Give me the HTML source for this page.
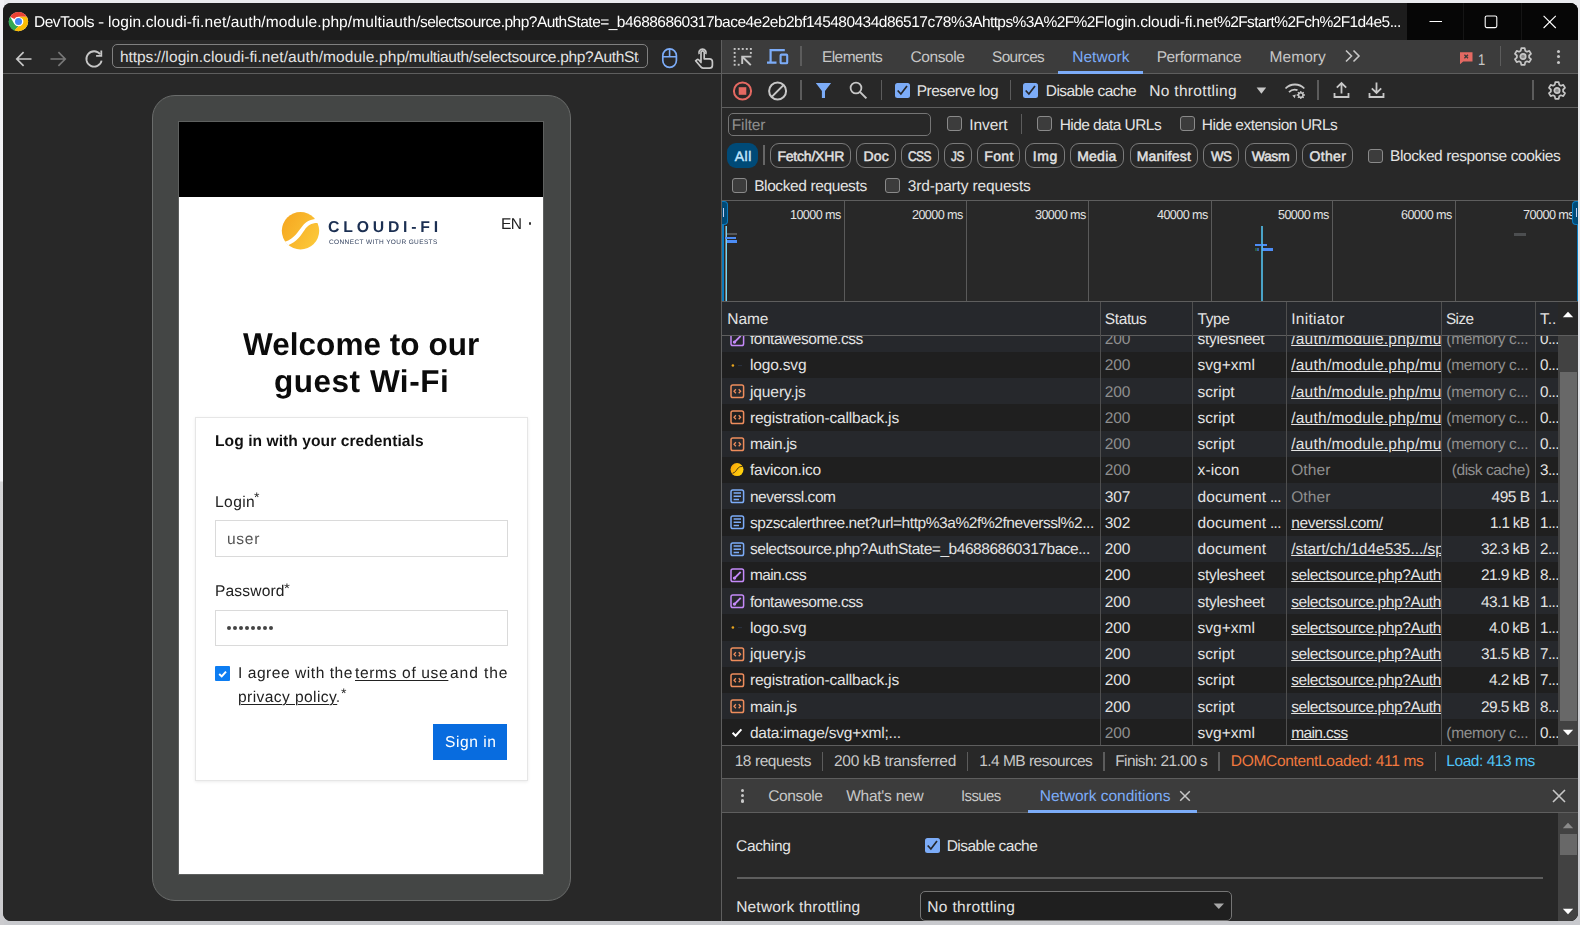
<!DOCTYPE html>
<html lang="en"><head><meta charset="utf-8"><title>DevTools</title>
<style>
html,body{margin:0;padding:0;}
body{width:1580px;height:925px;overflow:hidden;position:relative;background:#d6d6d6;font-family:"Liberation Sans",sans-serif;}
.b{position:absolute;box-sizing:border-box;display:block;}
.t{position:absolute;white-space:pre;font-family:"Liberation Sans",sans-serif;text-rendering:geometricPrecision;}
#win{position:absolute;left:3px;top:3px;width:1575px;height:918.4px;border-radius:8px;overflow:hidden;background:#282828;}

</style></head>
<body>
<div class="b" style="left:0;top:0;width:1580px;height:925px;background:linear-gradient(#e9eaed 0,#e4e5e9 40%,#cfd0d4 75%,#c8c9cd 100%)"></div>
<div class="b" style="left:0;top:0;width:4px;height:925px;background:linear-gradient(#f1f1f4 0,#f3f3f6 481px,#d4d4d6 482px,#cbcbce 100%)"></div>
<div id="win"><div id="in" class="b" style="left:-3px;top:-3px;width:1580px;height:925px">
<div class="b" style="left:3px;top:3px;width:1576px;height:37px;background:#1d1d1d;"></div>
<div class="b" style="left:1407px;top:3px;width:172px;height:37px;background:#060606;"></div>
<div class="b" style="left:1463px;top:3px;width:1px;height:37px;background:#151515;"></div>
<div class="b" style="left:1521px;top:3px;width:1px;height:37px;background:#151515;"></div>
<svg class="b" style="left:7.6px;top:11px;" width="21" height="21" viewBox="0 0 48 48"><circle cx="24" cy="24" r="22" fill="#fff"/>
<path d="M24 2a22 22 0 0 1 19.05 11H24a11 11 0 0 0-9.53 5.5L4.95 13A22 22 0 0 1 24 2z" fill="#ea4335"/>
<path d="M4.95 13l9.52 16.5A11 11 0 0 0 24 35l-9.52 9.9A22 22 0 0 1 4.95 13z" fill="#34a853"/>
<path d="M43.05 13A22 22 0 0 1 24 46c-3.3 0-6.5-.7-9.52-2.1L24 35a11 11 0 0 0 9.53-16.5L24 13z" fill="#fbbc04"/>
<circle cx="24" cy="24" r="10" fill="#fff"/><circle cx="24" cy="24" r="8" fill="#4285f4"/></svg>
<span class="t" id="t1" style="left:33.95px;top:12.82px;font-size:15.5px;line-height:20px;color:#ffffff;letter-spacing:-0.478px;will-change:transform;">DevTools</span>
<span class="t" id="t2" style="left:98.05px;top:12.82px;font-size:15.5px;line-height:20px;color:#ffffff;transform:scaleX(1.1998);transform-origin:0 0;will-change:transform;">-</span>
<span class="t" id="t3" style="left:107.85px;top:12.82px;font-size:15.5px;line-height:20px;color:#ffffff;letter-spacing:0.107px;will-change:transform;">login.cloudi-fi.net/auth/module.php/multiauth/</span>
<span class="t" id="t4" style="left:420.15px;top:12.82px;font-size:15.5px;line-height:20px;color:#ffffff;letter-spacing:-0.525px;will-change:transform;">selectsource.php?AuthState=_b46886860317bace4e2eb2bf145480434d86517c78</span>
<span class="t" id="t5" style="left:951.15px;top:12.82px;font-size:15.5px;line-height:20px;color:#ffffff;letter-spacing:-0.600px;transform:scaleX(0.9979);transform-origin:0 0;will-change:transform;">%3Ahttps%3A%2F%2F</span>
<span class="t" id="t6" style="left:1103.75px;top:12.82px;font-size:15.5px;line-height:20px;color:#ffffff;letter-spacing:-0.151px;will-change:transform;">login.cloudi-fi.net</span>
<span class="t" id="t7" style="left:1217.15px;top:12.82px;font-size:15.5px;line-height:20px;color:#ffffff;letter-spacing:-0.600px;transform:scaleX(0.9981);transform-origin:0 0;will-change:transform;">%2Fstart%2Fch%2F1d4e5...</span>
<svg class="b" style="left:1429px;top:15px;" width="14" height="14" viewBox="0 0 14 14"><path d="M0.5 6.5h12.5" stroke="#fff" stroke-width="1.1" fill="none"/></svg>
<svg class="b" style="left:1484px;top:15px;" width="14" height="14" viewBox="0 0 14 14"><rect x="1.2" y="1" width="11.6" height="11.6" rx="1.6" stroke="#fff" stroke-width="1.1" fill="none"/></svg>
<svg class="b" style="left:1543px;top:15px;" width="14" height="14" viewBox="0 0 14 14"><path d="M0.6 0.8L12.8 13M12.8 0.8L0.6 13" stroke="#fff" stroke-width="1.1" fill="none"/></svg>
<div class="b" style="left:3px;top:40px;width:718px;height:33px;background:#282828;"></div>
<div class="b" style="left:3px;top:73px;width:1576px;height:1px;background:#5e5e5e;"></div>
<svg class="b" style="left:14px;top:49px;" width="20" height="20" viewBox="0 0 20 20"><path d="M17.5 10H3.2M9.6 3.2L2.8 10l6.8 6.8" stroke="#c7c7c7" stroke-width="1.7" fill="none"/></svg>
<svg class="b" style="left:48px;top:49px;" width="20" height="20" viewBox="0 0 20 20"><path d="M2.5 10h14.3M10.4 3.2l6.8 6.800l-6.8 6.8" stroke="#777" stroke-width="1.7" fill="none"/></svg>
<svg class="b" style="left:83px;top:48px;" width="22" height="22" viewBox="0 0 22 22"><path d="M17.2 6.3A7.7 7.7 0 1 0 18.6 12.6" stroke="#c7c7c7" stroke-width="1.8" fill="none"/><path d="M18.3 2.6v5.2h-5.2" stroke="#c7c7c7" stroke-width="1.8" fill="none"/></svg>
<div class="b" style="left:112.2px;top:44.2px;width:536px;height:23.6px;background:#282828;border:1.2px solid #808080;border-radius:5px;"></div>
<span class="t" id="t8" style="left:120.05px;top:47.82px;font-size:15.5px;line-height:20px;color:#e3e3e3;letter-spacing:-0.103px;">https:</span>
<span class="t" id="t9" style="left:156.55px;top:47.82px;font-size:15.5px;line-height:20px;color:#e3e3e3;letter-spacing:0.105px;">//login.cloudi-fi.net/auth/module.php</span>
<span class="t" id="t10" style="left:404.75px;top:47.82px;font-size:15.5px;line-height:20px;color:#e3e3e3;letter-spacing:-0.310px;width:234.25px;overflow:hidden;">/multiauth/selectsource.php?AuthState</span>
<svg class="b" style="left:661px;top:47px;" width="18" height="22" viewBox="0 0 18 22"><rect x="1.800" y="1.800" width="13.600" height="18.600" rx="6.800" stroke="#7cacf8" stroke-width="1.700" fill="none"/><path d="M1.800 9.800h13.600M8.600 1.800v8" stroke="#7cacf8" stroke-width="1.600" fill="none"/></svg>
<svg class="b" style="left:694px;top:46px;" width="20" height="24" viewBox="0 0 20 24"><path d="M5.2 8.2a3.6 3.600 0 1 1 6.600 0" stroke="#c7c7c7" stroke-width="1.7" fill="none"/><path d="M7 16.500V6.4a1.60 1.600 0 0 1 3.2 0v6.4h5.200a3 3 0 0 1 3 3v3.400a3 3 0 0 1-3 3H9.400a3 3 0 0 1-2.300-1.100L1.600 14.800l1.200-1.000a1.500 1.500 0 0 1 1.900 0z" stroke="#c7c7c7" stroke-width="1.7" fill="none" stroke-linejoin="round"/></svg>
<div class="b" style="left:721px;top:40px;width:1.25px;height:881px;background:#5e5e5e;"></div>
<div class="b" style="left:3px;top:74px;width:718px;height:847px;background:#282828;"></div>
<div class="b" style="left:152px;top:95px;width:419px;height:805.6px;background:#444645;border:1px solid #6a6c6b;border-radius:23px;"></div>
<div class="b" style="left:178px;top:121px;width:366.3px;height:754.3px;background:#5e605f;"></div>
<div class="b" style="left:179px;top:122px;width:364.3px;height:75px;background:#000;"></div>
<div class="b" style="left:179px;top:197px;width:364.3px;height:677.3px;background:#fff;"></div>
<svg class="b" style="left:281px;top:212px" width="39" height="38" viewBox="0 0 39 38">
<defs><linearGradient id="lg" x1="0" y1="0.2" x2="1" y2="0.8"><stop offset="0" stop-color="#f6a821"/><stop offset="1" stop-color="#fcc93a"/></linearGradient></defs>
<circle cx="19.500" cy="18.800" r="18.700" fill="url(#lg)"/>
<path d="M38.500 7.200C31 6.600 25.500 9 21.300 14.200C17.200 19.300 13.500 26.500 4 29.800L7.200 33.200C15.500 30 19.800 23.500 23.600 18C27 13 31 10.600 38.500 11.200Z" fill="#fff"/>
</svg>
<span class="t" id="t11" style="left:327.63px;top:216.96px;font-size:15.8px;line-height:21px;color:#1b2f52;letter-spacing:3.785px;font-weight:700;will-change:transform;">CLOUDI-FI</span>
<span class="t" id="t12" style="left:328.74px;top:238.94px;font-size:6.5px;line-height:8px;color:#33425f;letter-spacing:0.386px;will-change:transform;">CONNECT WITH YOUR GUESTS</span>
<span class="t" id="t13" style="left:500.54px;top:214.84px;font-size:15.6px;line-height:20px;color:#222;letter-spacing:-0.600px;transform:scaleX(0.9879);transform-origin:0 0;will-change:transform;">EN</span>
<div class="b" style="left:528.5px;top:222.2px;width:2.4px;height:2.4px;background:#333;border-radius:1.2px;"></div>
<span class="t" id="t14" style="left:243.07px;top:324.02px;font-size:31.5px;line-height:41px;color:#0b0b0b;letter-spacing:0.043px;font-weight:700;will-change:transform;">Welcome to our</span>
<span class="t" id="t15" style="left:273.67px;top:361.02px;font-size:31.5px;line-height:41px;color:#0b0b0b;letter-spacing:0.521px;font-weight:700;will-change:transform;">guest Wi-Fi</span>
<div class="b" style="left:194.5px;top:416.5px;width:333.5px;height:364px;background:#fff;border:1px solid #e6e6e6;box-shadow:0 1px 3px rgba(0,0,0,.08);"></div>
<span class="t" id="t16" style="left:214.64px;top:431.84px;font-size:15.6px;line-height:20px;color:#111;letter-spacing:0.057px;font-weight:700;will-change:transform;">Log in with your credentials</span>
<span class="t" id="t17" style="left:214.64px;top:492.84px;font-size:15.6px;line-height:20px;color:#222;letter-spacing:0.390px;will-change:transform;">Login</span>
<span class="t" id="t18" style="left:254.33px;top:487.96px;font-size:14px;line-height:18px;color:#222;will-change:transform;">*</span>
<div class="b" style="left:214.6px;top:520.2px;width:293px;height:36.4px;background:#fff;border:1px solid #dadada;"></div>
<span class="t" id="t19" style="left:227.04px;top:529.84px;font-size:15.6px;line-height:20px;color:#555;letter-spacing:0.691px;will-change:transform;">user</span>
<span class="t" id="t20" style="left:214.74px;top:581.84px;font-size:15.6px;line-height:20px;color:#222;letter-spacing:0.150px;will-change:transform;">Password</span>
<span class="t" id="t21" style="left:283.63px;top:578.96px;font-size:14px;line-height:18px;color:#222;transform:scaleX(1.0709);transform-origin:0 0;will-change:transform;">*</span>
<div class="b" style="left:214.6px;top:609.6px;width:293px;height:36.2px;background:#fff;border:1px solid #dadada;"></div>
<div class="b" style="left:227.2px;top:626px;width:4.2px;height:4.2px;background:#444;border-radius:2.1px;"></div>
<div class="b" style="left:233.14999999999998px;top:626px;width:4.2px;height:4.2px;background:#444;border-radius:2.1px;"></div>
<div class="b" style="left:239.1px;top:626px;width:4.2px;height:4.2px;background:#444;border-radius:2.1px;"></div>
<div class="b" style="left:245.04999999999998px;top:626px;width:4.2px;height:4.2px;background:#444;border-radius:2.1px;"></div>
<div class="b" style="left:251.0px;top:626px;width:4.2px;height:4.2px;background:#444;border-radius:2.1px;"></div>
<div class="b" style="left:256.95px;top:626px;width:4.2px;height:4.2px;background:#444;border-radius:2.1px;"></div>
<div class="b" style="left:262.9px;top:626px;width:4.2px;height:4.2px;background:#444;border-radius:2.1px;"></div>
<div class="b" style="left:268.84999999999997px;top:626px;width:4.2px;height:4.2px;background:#444;border-radius:2.1px;"></div>
<div class="b" style="left:215px;top:665.5px;width:15.4px;height:15.4px;background:#0d7df2;border-radius:1px;"></div>
<svg class="b" style="left:215px;top:665.5px;" width="16" height="16" viewBox="0 0 16 16"><path d="M4.200 8.100l2.500 2.300l4.300-4.800" stroke="#fff" stroke-width="2" fill="none"/></svg>
<span class="t" id="t22" style="left:237.74px;top:663.84px;font-size:15.6px;line-height:20px;color:#222;letter-spacing:0.519px;will-change:transform;">I agree with the</span>
<span class="t" id="t23" style="left:354.94px;top:663.84px;font-size:15.6px;line-height:20px;color:#222;letter-spacing:0.629px;will-change:transform;text-decoration:underline;text-decoration-thickness:1.4px;text-underline-offset:2.2px;">terms of use</span>
<span class="t" id="t24" style="left:450.34px;top:663.84px;font-size:15.6px;line-height:20px;color:#222;letter-spacing:0.897px;will-change:transform;">and the</span>
<span class="t" id="t25" style="left:238.04px;top:687.84px;font-size:15.6px;line-height:20px;color:#222;letter-spacing:0.402px;will-change:transform;text-decoration:underline;text-decoration-thickness:1.4px;text-underline-offset:2.2px;">privacy policy</span>
<span class="t" id="t26" style="left:336.04px;top:687.84px;font-size:15.6px;line-height:20px;color:#222;transform:scaleX(0.8785);transform-origin:0 0;will-change:transform;">.</span>
<span class="t" id="t27" style="left:341.03px;top:683.96px;font-size:14px;line-height:18px;color:#222;will-change:transform;">*</span>
<div class="b" style="left:433.4px;top:724px;width:73.8px;height:36.2px;background:#086cdf;"></div>
<span class="t" id="t28" style="left:444.84px;top:732.84px;font-size:15.6px;line-height:20px;color:#fff;letter-spacing:0.555px;will-change:transform;">Sign in</span>
<div class="b" style="left:722.25px;top:40px;width:856px;height:33px;background:#3c3c3c;"></div>
<div class="b" style="left:722px;top:73px;width:857px;height:1px;background:#5e5e5e;"></div>
<svg class="b" style="left:733px;top:47px;" width="20" height="20" viewBox="0 0 20 20"><rect x="0.70" y="1.00" width="1.900" height="1.900" fill="#c7c7c7"/><rect x="4.75" y="1.00" width="1.900" height="1.900" fill="#c7c7c7"/><rect x="8.80" y="1.00" width="1.900" height="1.900" fill="#c7c7c7"/><rect x="12.85" y="1.00" width="1.900" height="1.900" fill="#c7c7c7"/><rect x="16.90" y="1.00" width="1.900" height="1.900" fill="#c7c7c7"/><rect x="0.70" y="4.95" width="1.900" height="1.900" fill="#c7c7c7"/><rect x="0.70" y="8.90" width="1.900" height="1.900" fill="#c7c7c7"/><rect x="0.70" y="12.85" width="1.900" height="1.900" fill="#c7c7c7"/><rect x="0.70" y="16.80" width="1.900" height="1.900" fill="#c7c7c7"/><rect x="16.90" y="4.95" width="1.900" height="1.900" fill="#c7c7c7"/><rect x="4.75" y="16.80" width="1.900" height="1.900" fill="#c7c7c7"/><path d="M18.400 9.600H9.200V17" stroke="#c7c7c7" stroke-width="1.900" fill="none"/><path d="M9.600 10l8.200 8.200" stroke="#c7c7c7" stroke-width="1.900" fill="none"/></svg>
<svg class="b" style="left:766px;top:48px;" width="24" height="18" viewBox="0 0 24 18"><path d="M4.600 14.500V2.200h14.200" stroke="#7cacf8" stroke-width="2.200" fill="none"/><path d="M1 14.600h9.500" stroke="#7cacf8" stroke-width="2.200" fill="none"/><rect x="14.600" y="6.600" width="6.600" height="8.600" rx="0.800" stroke="#7cacf8" stroke-width="2.100" fill="none"/></svg>
<div class="b" style="left:800.2px;top:46px;width:1.8px;height:20px;background:#5c5c5c;"></div>
<span class="t" id="t29" style="left:821.95px;top:47.82px;font-size:15.5px;line-height:20px;color:#c7c7c7;letter-spacing:-0.560px;">Elements</span>
<span class="t" id="t30" style="left:910.55px;top:47.82px;font-size:15.5px;line-height:20px;color:#c7c7c7;letter-spacing:-0.428px;">Console</span>
<span class="t" id="t31" style="left:991.55px;top:47.82px;font-size:15.5px;line-height:20px;color:#c7c7c7;letter-spacing:-0.600px;transform:scaleX(0.9912);transform-origin:0 0;">Sources</span>
<span class="t" id="t32" style="left:1072.15px;top:47.82px;font-size:15.5px;line-height:20px;color:#7cacf8;letter-spacing:0.074px;">Network</span>
<div class="b" style="left:1058px;top:71px;width:85px;height:2.7px;background:#7cacf8;"></div>
<span class="t" id="t33" style="left:1156.65px;top:47.82px;font-size:15.5px;line-height:20px;color:#c7c7c7;letter-spacing:-0.373px;">Performance</span>
<span class="t" id="t34" style="left:1269.55px;top:47.82px;font-size:15.5px;line-height:20px;color:#c7c7c7;letter-spacing:0.064px;">Memory</span>
<svg class="b" style="left:1344px;top:49px;" width="18" height="14" viewBox="0 0 18 14"><path d="M2 1.500l5.500 5.500l-5.500 5.500M9.500 1.500l5.500 5.500l-5.500 5.500" stroke="#c7c7c7" stroke-width="1.600" fill="none"/></svg>
<svg class="b" style="left:1459px;top:51px;" width="15" height="14" viewBox="0 0 15 14"><path d="M1 1.200h12.500v9.300H4.200L1 13.200z" fill="#e46962"/><path d="M5.400 3.700l3.600 3.600M9 3.700L5.400 7.300" stroke="#3c3c3c" stroke-width="1.300"/></svg>
<span class="t" id="t35" style="left:1478.15px;top:50.82px;font-size:15.5px;line-height:20px;color:#c7c7c7;transform:scaleX(0.8354);transform-origin:0 0;">1</span>
<div class="b" style="left:1499.7px;top:46px;width:1.8px;height:20px;background:#5c5c5c;"></div>
<svg class="b" style="left:1513.3px;top:46.7px;" width="20" height="19" viewBox="0 0 20 19"><path fill="none" stroke="#c7c7c7" stroke-width="1.700" stroke-linejoin="round" d="M8.300 1.200h3.400l.500 2.500 1.700 1 2.400-.800 1.700 2.900-1.900 1.700v2l1.900 1.700-1.700 2.900-2.400-.800-1.700 1-.500 2.500H8.300l-.500-2.500-1.700-1-2.400.800L2 12.200l1.900-1.700v-2L2 6.800l1.700-2.900 2.400.800 1.700-1z"/><circle cx="10" cy="9.500" r="2.700" fill="#8a8a8a" stroke="#c7c7c7" stroke-width="1.700"/></svg>
<div class="b" style="left:1556.9px;top:49.699999999999996px;width:3.3px;height:3.3px;background:#c7c7c7;border-radius:2px;"></div>
<div class="b" style="left:1556.9px;top:55.1px;width:3.3px;height:3.3px;background:#c7c7c7;border-radius:2px;"></div>
<div class="b" style="left:1556.9px;top:60.5px;width:3.3px;height:3.3px;background:#c7c7c7;border-radius:2px;"></div>
<div class="b" style="left:722.25px;top:74px;width:856px;height:33px;background:#282828;"></div>
<div class="b" style="left:722px;top:107px;width:857px;height:1px;background:#5e5e5e;"></div>
<svg class="b" style="left:732px;top:80.5px;" width="21" height="21" viewBox="0 0 21 21"><circle cx="10.500" cy="10" r="8.600" stroke="#e46962" stroke-width="2" fill="none"/><rect x="6.700" y="6.200" width="7.600" height="7.600" fill="#e46962"/></svg>
<svg class="b" style="left:767px;top:80.5px;" width="21" height="21" viewBox="0 0 21 21"><circle cx="10.600" cy="10" r="8.500" stroke="#c7c7c7" stroke-width="2" fill="none"/><path d="M4.500 16.100L16.700 3.900" stroke="#c7c7c7" stroke-width="2"/></svg>
<div class="b" style="left:799.9px;top:80px;width:1.8px;height:20px;background:#5c5c5c;"></div>
<svg class="b" style="left:815px;top:82px;" width="18" height="17" viewBox="0 0 18 17"><path d="M0.800 1h15.300l-6.100 8v7.100H6.900V9z" fill="#7cacf8"/></svg>
<svg class="b" style="left:849px;top:81px;" width="19" height="19" viewBox="0 0 19 19"><circle cx="7" cy="7" r="5.400" stroke="#c7c7c7" stroke-width="1.800" fill="none"/><path d="M10.900 10.900l6.500 6.500" stroke="#c7c7c7" stroke-width="2"/></svg>
<div class="b" style="left:880.7px;top:80px;width:1.8px;height:20px;background:#5c5c5c;"></div>
<div class="b" style="left:895.2px;top:83.1px;width:14.8px;height:14.8px;background:#7cacf8;border-radius:2.500px;"></div>
<svg class="b" style="left:895.2px;top:83.1px;" width="15" height="15" viewBox="0 0 15 15"><path d="M2.700 7.500l3.200 3.500l6.100-8" stroke="#26282c" stroke-width="1.700" fill="none"/></svg>
<span class="t" id="t36" style="left:916.65px;top:81.82px;font-size:15.5px;line-height:20px;color:#e3e3e3;letter-spacing:-0.465px;">Preserve log</span>
<div class="b" style="left:1009.7px;top:80px;width:1.8px;height:20px;background:#5c5c5c;"></div>
<div class="b" style="left:1023.3px;top:83.1px;width:14.8px;height:14.8px;background:#7cacf8;border-radius:2.500px;"></div>
<svg class="b" style="left:1023.3px;top:83.1px;" width="15" height="15" viewBox="0 0 15 15"><path d="M2.700 7.500l3.200 3.500l6.100-8" stroke="#26282c" stroke-width="1.700" fill="none"/></svg>
<span class="t" id="t37" style="left:1045.75px;top:81.82px;font-size:15.5px;line-height:20px;color:#e3e3e3;letter-spacing:-0.538px;">Disable cache</span>
<span class="t" id="t38" style="left:1149.15px;top:81.82px;font-size:15.5px;line-height:20px;color:#e3e3e3;letter-spacing:0.327px;">No throttling</span>
<svg class="b" style="left:1255.7px;top:87px;" width="11" height="8" viewBox="0 0 11 8"><path d="M0.600 0.400h9.600l-4.800 6.400z" fill="#c7c7c7"/></svg>
<svg class="b" style="left:1284px;top:81px;" width="23" height="19" viewBox="0 0 23 19"><path d="M1.500 7.500a13 13 0 0 1 18.800 0" stroke="#c7c7c7" stroke-width="1.800" fill="none"/><path d="M5 11.200a8.200 8.200 0 0 1 8.500-2" stroke="#c7c7c7" stroke-width="1.800" fill="none"/><path d="M8.300 14.400l2.500 2.800l1-3.700z" fill="#c7c7c7"/><circle cx="16.800" cy="14" r="2.300" stroke="#c7c7c7" stroke-width="1.600" fill="none"/><path d="M16.800 9.900v1.500M16.800 16.600v1.500M12.700 14h1.500M19.400 14h1.500M13.900 11.100l1 1M18.700 15.900l1 1M13.900 16.900l1-1M18.700 12.100l1-1" stroke="#c7c7c7" stroke-width="1.300"/></svg>
<div class="b" style="left:1317.4px;top:80px;width:1.8px;height:20px;background:#5c5c5c;"></div>
<svg class="b" style="left:1333px;top:81px;" width="17" height="18" viewBox="0 0 17 18"><path d="M8.500 12.500V2.500M3.800 6.600l4.700-4.600l4.700 4.600" stroke="#c7c7c7" stroke-width="1.800" fill="none"/><path d="M1.500 12v4h14v-4" stroke="#c7c7c7" stroke-width="1.800" fill="none"/></svg>
<svg class="b" style="left:1368px;top:81px;" width="17" height="18" viewBox="0 0 17 18"><path d="M8.500 1.500v10M3.800 7.400l4.700 4.600l4.700-4.600" stroke="#c7c7c7" stroke-width="1.800" fill="none"/><path d="M1.500 12v4h14v-4" stroke="#c7c7c7" stroke-width="1.800" fill="none"/></svg>
<div class="b" style="left:1532.2px;top:80px;width:1.8px;height:20px;background:#5c5c5c;"></div>
<svg class="b" style="left:1546.5px;top:81.2px;" width="20" height="19" viewBox="0 0 20 19"><path fill="none" stroke="#c7c7c7" stroke-width="1.700" stroke-linejoin="round" d="M8.300 1.200h3.400l.500 2.500 1.700 1 2.400-.800 1.700 2.900-1.900 1.700v2l1.900 1.700-1.700 2.900-2.400-.800-1.700 1-.500 2.500H8.300l-.500-2.500-1.700-1-2.400.800L2 12.200l1.900-1.700v-2L2 6.800l1.700-2.900 2.400.800 1.700-1z"/><circle cx="10" cy="9.500" r="2.700" fill="#8a8a8a" stroke="#c7c7c7" stroke-width="1.700"/></svg>
<div class="b" style="left:722.25px;top:108px;width:856px;height:93px;background:#282828;"></div>
<div class="b" style="left:727.6px;top:112.5px;width:203px;height:23.4px;background:#282828;border:1.200px solid #757575;border-radius:5px;"></div>
<span class="t" id="t39" style="left:731.85px;top:115.82px;font-size:15.5px;line-height:20px;color:#8f8f8f;letter-spacing:-0.190px;">Filter</span>
<div class="b" style="left:947px;top:116.2px;width:14.8px;height:14.8px;background:#3c3c3c;border:1.400px solid #8a8a8a;border-radius:3px;"></div>
<span class="t" id="t40" style="left:969.15px;top:115.82px;font-size:15.5px;line-height:20px;color:#e3e3e3;letter-spacing:-0.052px;">Invert</span>
<div class="b" style="left:1020.5px;top:114px;width:1.8px;height:19.5px;background:#5c5c5c;"></div>
<div class="b" style="left:1037.2px;top:116.2px;width:14.8px;height:14.8px;background:#3c3c3c;border:1.400px solid #8a8a8a;border-radius:3px;"></div>
<span class="t" id="t41" style="left:1059.65px;top:115.82px;font-size:15.5px;line-height:20px;color:#e3e3e3;letter-spacing:-0.571px;">Hide data URLs</span>
<div class="b" style="left:1180.3px;top:116.2px;width:14.8px;height:14.8px;background:#3c3c3c;border:1.400px solid #8a8a8a;border-radius:3px;"></div>
<span class="t" id="t42" style="left:1201.85px;top:115.82px;font-size:15.5px;line-height:20px;color:#e3e3e3;letter-spacing:-0.534px;">Hide extension URLs</span>
<div class="b" style="left:727px;top:143px;width:31px;height:25px;background:#004a77;border-radius:9px;"></div>
<span class="t" id="t43" style="left:734.73px;top:146.96px;font-size:14px;line-height:18px;color:#c2e7ff;letter-spacing:0.489px;-webkit-text-stroke:0.45px #c2e7ff;">All</span>
<div class="b" style="left:763.1px;top:145px;width:1.8px;height:20px;background:#666;"></div>
<div class="b" style="left:770px;top:143px;width:81px;height:25px;border:1.250px solid #7a7a7a;border-radius:9px;"></div>
<span class="t" id="t44" style="left:777.43px;top:146.96px;font-size:14px;line-height:18px;color:#e3e3e3;letter-spacing:-0.204px;-webkit-text-stroke:0.45px #e3e3e3;">Fetch/XHR</span>
<div class="b" style="left:856.2px;top:143px;width:39.799999999999955px;height:25px;border:1.250px solid #7a7a7a;border-radius:9px;"></div>
<span class="t" id="t45" style="left:863.53px;top:146.96px;font-size:14px;line-height:18px;color:#e3e3e3;letter-spacing:0.117px;-webkit-text-stroke:0.45px #e3e3e3;">Doc</span>
<div class="b" style="left:901px;top:143px;width:38px;height:25px;border:1.250px solid #7a7a7a;border-radius:9px;"></div>
<span class="t" id="t46" style="left:908.33px;top:146.96px;font-size:14px;line-height:18px;color:#e3e3e3;letter-spacing:-0.600px;transform:scaleX(0.8530);transform-origin:0 0;-webkit-text-stroke:0.45px #e3e3e3;">CSS</span>
<div class="b" style="left:944px;top:143px;width:28px;height:25px;border:1.250px solid #7a7a7a;border-radius:9px;"></div>
<span class="t" id="t47" style="left:951.33px;top:146.96px;font-size:14px;line-height:18px;color:#e3e3e3;letter-spacing:-0.600px;transform:scaleX(0.8410);transform-origin:0 0;-webkit-text-stroke:0.45px #e3e3e3;">JS</span>
<div class="b" style="left:977px;top:143px;width:43px;height:25px;border:1.250px solid #7a7a7a;border-radius:9px;"></div>
<span class="t" id="t48" style="left:984.33px;top:146.96px;font-size:14px;line-height:18px;color:#e3e3e3;letter-spacing:0.308px;-webkit-text-stroke:0.45px #e3e3e3;">Font</span>
<div class="b" style="left:1025px;top:143px;width:39.799999999999955px;height:25px;border:1.250px solid #7a7a7a;border-radius:9px;"></div>
<span class="t" id="t49" style="left:1032.73px;top:146.96px;font-size:14px;line-height:18px;color:#e3e3e3;letter-spacing:0.598px;-webkit-text-stroke:0.45px #e3e3e3;">Img</span>
<div class="b" style="left:1070.3px;top:143px;width:53.299999999999955px;height:25px;border:1.250px solid #7a7a7a;border-radius:9px;"></div>
<span class="t" id="t50" style="left:1077.23px;top:146.96px;font-size:14px;line-height:18px;color:#e3e3e3;letter-spacing:0.225px;-webkit-text-stroke:0.45px #e3e3e3;">Media</span>
<div class="b" style="left:1129.5px;top:143px;width:68.40000000000009px;height:25px;border:1.250px solid #7a7a7a;border-radius:9px;"></div>
<span class="t" id="t51" style="left:1136.73px;top:146.96px;font-size:14px;line-height:18px;color:#e3e3e3;letter-spacing:0.174px;-webkit-text-stroke:0.45px #e3e3e3;">Manifest</span>
<div class="b" style="left:1203.3px;top:143px;width:35.600000000000136px;height:25px;border:1.250px solid #7a7a7a;border-radius:9px;"></div>
<span class="t" id="t52" style="left:1210.73px;top:146.96px;font-size:14px;line-height:18px;color:#e3e3e3;letter-spacing:-0.600px;transform:scaleX(0.9489);transform-origin:0 0;-webkit-text-stroke:0.45px #e3e3e3;">WS</span>
<div class="b" style="left:1244.7px;top:143px;width:52.299999999999955px;height:25px;border:1.250px solid #7a7a7a;border-radius:9px;"></div>
<span class="t" id="t53" style="left:1251.73px;top:146.96px;font-size:14px;line-height:18px;color:#e3e3e3;letter-spacing:-0.439px;-webkit-text-stroke:0.45px #e3e3e3;">Wasm</span>
<div class="b" style="left:1302.4px;top:143px;width:50.5px;height:25px;border:1.250px solid #7a7a7a;border-radius:9px;"></div>
<span class="t" id="t54" style="left:1309.43px;top:146.96px;font-size:14px;line-height:18px;color:#e3e3e3;letter-spacing:0.356px;-webkit-text-stroke:0.45px #e3e3e3;">Other</span>
<div class="b" style="left:1368.2px;top:148.5px;width:14.8px;height:14.8px;background:#3c3c3c;border:1.400px solid #8a8a8a;border-radius:3px;"></div>
<span class="t" id="t55" style="left:1390.05px;top:146.82px;font-size:15.5px;line-height:20px;color:#e3e3e3;letter-spacing:-0.408px;">Blocked response cookies</span>
<div class="b" style="left:732.3px;top:178.4px;width:14.8px;height:14.8px;background:#3c3c3c;border:1.400px solid #8a8a8a;border-radius:3px;"></div>
<span class="t" id="t56" style="left:754.15px;top:176.82px;font-size:15.5px;line-height:20px;color:#e3e3e3;letter-spacing:-0.393px;">Blocked requests</span>
<div class="b" style="left:885px;top:178.4px;width:14.8px;height:14.8px;background:#3c3c3c;border:1.400px solid #8a8a8a;border-radius:3px;"></div>
<span class="t" id="t57" style="left:907.75px;top:176.82px;font-size:15.5px;line-height:20px;color:#e3e3e3;letter-spacing:-0.157px;">3rd-party requests</span>
<div class="b" style="left:722.25px;top:200px;width:856px;height:1px;background:#5e5e5e;"></div>
<div class="b" style="left:722.25px;top:201px;width:856px;height:100px;background:#282828;"></div>
<div class="b" style="left:843.6999999999999px;top:201px;width:1.2px;height:100px;background:#5a5a5a;"></div>
<div class="b" style="left:966.0px;top:201px;width:1.2px;height:100px;background:#5a5a5a;"></div>
<div class="b" style="left:1088.3000000000002px;top:201px;width:1.2px;height:100px;background:#5a5a5a;"></div>
<div class="b" style="left:1210.8000000000002px;top:201px;width:1.2px;height:100px;background:#5a5a5a;"></div>
<div class="b" style="left:1332.0px;top:201px;width:1.2px;height:100px;background:#5a5a5a;"></div>
<div class="b" style="left:1454.7px;top:201px;width:1.2px;height:100px;background:#5a5a5a;"></div>
<span class="t" id="t58" style="left:789.98px;top:206.06px;font-size:13px;line-height:17px;color:#e3e3e3;letter-spacing:-0.600px;transform:scaleX(0.9685);transform-origin:0 0;">10000 ms</span>
<span class="t" id="t59" style="left:912.28px;top:206.06px;font-size:13px;line-height:17px;color:#e3e3e3;letter-spacing:-0.600px;transform:scaleX(0.9685);transform-origin:0 0;">20000 ms</span>
<span class="t" id="t60" style="left:1034.59px;top:206.06px;font-size:13px;line-height:17px;color:#e3e3e3;letter-spacing:-0.600px;transform:scaleX(0.9685);transform-origin:0 0;">30000 ms</span>
<span class="t" id="t61" style="left:1157.09px;top:206.06px;font-size:13px;line-height:17px;color:#e3e3e3;letter-spacing:-0.600px;transform:scaleX(0.9685);transform-origin:0 0;">40000 ms</span>
<span class="t" id="t62" style="left:1278.29px;top:206.06px;font-size:13px;line-height:17px;color:#e3e3e3;letter-spacing:-0.600px;transform:scaleX(0.9685);transform-origin:0 0;">50000 ms</span>
<span class="t" id="t63" style="left:1400.99px;top:206.06px;font-size:13px;line-height:17px;color:#e3e3e3;letter-spacing:-0.600px;transform:scaleX(0.9685);transform-origin:0 0;">60000 ms</span>
<span class="t" id="t64" style="left:1523.09px;top:206.06px;font-size:13px;line-height:17px;color:#e3e3e3;letter-spacing:-0.600px;transform:scaleX(0.9761);transform-origin:0 0;">70000 ms</span>
<div class="b" style="left:722.25px;top:201px;width:2px;height:100px;background:#0b7bbf;"></div>
<div class="b" style="left:722.25px;top:201px;width:5.8px;height:23.6px;background:#004a77;border:1.300px solid #0b7bbf;border-left:none;border-radius:0 4px 4px 0;"></div>
<div class="b" style="left:723px;top:208px;width:1.2px;height:9px;background:#b8cdf5;"></div>
<div class="b" style="left:724.8px;top:226px;width:0.9px;height:75px;background:#7a7a7a;"></div>
<div class="b" style="left:725.6px;top:226px;width:1.6px;height:75px;background:#6fd3f7;"></div>
<div class="b" style="left:727.4px;top:233px;width:10px;height:2px;background:#555759;"></div>
<div class="b" style="left:725px;top:236.6px;width:11.3px;height:2.6px;background:#4d8df6;"></div>
<div class="b" style="left:726.7px;top:240.2px;width:10.6px;height:2.8px;background:#4d8df6;"></div>
<div class="b" style="left:1260.8px;top:226px;width:2.3px;height:75px;background:#4aa3c8;"></div>
<div class="b" style="left:1254.6px;top:244px;width:12.2px;height:2.4px;background:#4d8df6;"></div>
<div class="b" style="left:1261.6px;top:247.8px;width:11.4px;height:3px;background:#4d8df6;"></div>
<div class="b" style="left:1254.8px;top:247.8px;width:2px;height:3px;background:#2c5f3e;"></div>
<div class="b" style="left:1256.8px;top:247.8px;width:2.4px;height:3px;background:#3a5fa8;"></div>
<div class="b" style="left:1262px;top:244px;width:1.3px;height:6.8px;background:#56b4f0;"></div>
<div class="b" style="left:1514px;top:233px;width:12px;height:2.5px;background:#4c4e50;"></div>
<div class="b" style="left:1572px;top:201px;width:6.5px;height:23.6px;background:#004a77;border:1.300px solid #0b7bbf;border-right:none;border-radius:4px 0 0 4px;"></div>
<div class="b" style="left:1575.8px;top:208px;width:1.2px;height:9px;background:#b8cdf5;"></div>
<div class="b" style="left:1576.8px;top:224px;width:1.3px;height:77px;background:#0b7bbf;"></div>
<div class="b" style="left:722.25px;top:301px;width:856px;height:1px;background:#5e5e5e;"></div>
<div class="b" style="left:722.25px;top:302px;width:836px;height:443px;background:#1f1f1f;"></div>
<div class="b" style="left:722.25px;top:325.5px;width:836px;height:26.25px;background:#26282c;"></div>
<svg class="b" style="left:730px;top:331.5px;" width="15" height="15" viewBox="0 0 15 15"><rect x="1" y="1" width="12.600" height="12.600" rx="1.800" stroke="#c58af9" stroke-width="1.500" fill="none"/><path d="M4.800 9.800L10.700 3.800" stroke="#c58af9" stroke-width="1.900"/><circle cx="4.500" cy="10.100" r="1.700" fill="#c58af9"/></svg>
<span class="t" id="t65" style="left:749.95px;top:329.82px;font-size:15.5px;line-height:20px;color:#e3e3e3;letter-spacing:-0.460px;">fontawesome.css</span>
<span class="t" id="t66" style="left:1104.85px;top:329.82px;font-size:15.5px;line-height:20px;color:#8f8f8f;letter-spacing:-0.135px;">200</span>
<span class="t" id="t67" style="left:1197.55px;top:329.82px;font-size:15.5px;line-height:20px;color:#e3e3e3;letter-spacing:-0.299px;">stylesheet</span>
<span class="t" id="t68" style="left:1291.15px;top:329.82px;font-size:15.5px;line-height:20px;color:#e3e3e3;letter-spacing:0.254px;text-decoration:underline;width:149.85px;overflow:hidden;">/auth/module.php/multiauth</span>
<span class="t" id="t69" style="left:1446.35px;top:329.82px;font-size:15.5px;line-height:20px;color:#8f8f8f;letter-spacing:-0.347px;">(memory c...</span>
<span class="t" id="t70" style="left:1540.05px;top:329.82px;font-size:15.5px;line-height:20px;color:#e3e3e3;letter-spacing:-0.600px;transform:scaleX(0.9827);transform-origin:0 0;">0...</span>
<div class="b" style="left:722.25px;top:351.75px;width:836px;height:26.25px;background:#1f1f1f;"></div>
<svg class="b" style="left:730px;top:357.75px;" width="15" height="15" viewBox="0 0 15 15"><circle cx="2.900" cy="7.500" r="1.300" fill="#e8a51e"/><path d="M8 7.600h4" stroke="#2a3240" stroke-width="1"/></svg>
<span class="t" id="t71" style="left:749.95px;top:355.82px;font-size:15.5px;line-height:20px;color:#e3e3e3;letter-spacing:-0.161px;">logo.svg</span>
<span class="t" id="t72" style="left:1104.85px;top:355.82px;font-size:15.5px;line-height:20px;color:#8f8f8f;letter-spacing:-0.135px;">200</span>
<span class="t" id="t73" style="left:1197.55px;top:355.82px;font-size:15.5px;line-height:20px;color:#e3e3e3;">svg+xml</span>
<span class="t" id="t74" style="left:1291.15px;top:355.82px;font-size:15.5px;line-height:20px;color:#e3e3e3;letter-spacing:0.254px;text-decoration:underline;width:149.85px;overflow:hidden;">/auth/module.php/multiauth</span>
<span class="t" id="t75" style="left:1446.35px;top:355.82px;font-size:15.5px;line-height:20px;color:#8f8f8f;letter-spacing:-0.347px;">(memory c...</span>
<span class="t" id="t76" style="left:1540.05px;top:355.82px;font-size:15.5px;line-height:20px;color:#e3e3e3;letter-spacing:-0.600px;transform:scaleX(0.9827);transform-origin:0 0;">0...</span>
<div class="b" style="left:722.25px;top:378.0px;width:836px;height:26.25px;background:#26282c;"></div>
<svg class="b" style="left:730px;top:384.0px;" width="15" height="15" viewBox="0 0 15 15"><rect x="1" y="1" width="12.600" height="12.600" rx="1.800" stroke="#ee8d5c" stroke-width="1.500" fill="none"/><path d="M5.900 5.200L4 7.200l1.900 2M8.700 5.200l1.900 2l-1.900 2" stroke="#ee8d5c" stroke-width="1.300" fill="none"/></svg>
<span class="t" id="t77" style="left:749.95px;top:382.82px;font-size:15.5px;line-height:20px;color:#e3e3e3;letter-spacing:-0.084px;">jquery.js</span>
<span class="t" id="t78" style="left:1104.85px;top:382.82px;font-size:15.5px;line-height:20px;color:#8f8f8f;letter-spacing:-0.135px;">200</span>
<span class="t" id="t79" style="left:1197.55px;top:382.82px;font-size:15.5px;line-height:20px;color:#e3e3e3;letter-spacing:0.012px;">script</span>
<span class="t" id="t80" style="left:1291.15px;top:382.82px;font-size:15.5px;line-height:20px;color:#e3e3e3;letter-spacing:0.254px;text-decoration:underline;width:149.85px;overflow:hidden;">/auth/module.php/multiauth</span>
<span class="t" id="t81" style="left:1446.35px;top:382.82px;font-size:15.5px;line-height:20px;color:#8f8f8f;letter-spacing:-0.347px;">(memory c...</span>
<span class="t" id="t82" style="left:1540.05px;top:382.82px;font-size:15.5px;line-height:20px;color:#e3e3e3;letter-spacing:-0.600px;transform:scaleX(0.9827);transform-origin:0 0;">0...</span>
<div class="b" style="left:722.25px;top:404.25px;width:836px;height:26.25px;background:#1f1f1f;"></div>
<svg class="b" style="left:730px;top:410.25px;" width="15" height="15" viewBox="0 0 15 15"><rect x="1" y="1" width="12.600" height="12.600" rx="1.800" stroke="#ee8d5c" stroke-width="1.500" fill="none"/><path d="M5.900 5.200L4 7.200l1.900 2M8.700 5.200l1.900 2l-1.900 2" stroke="#ee8d5c" stroke-width="1.300" fill="none"/></svg>
<span class="t" id="t83" style="left:749.95px;top:408.82px;font-size:15.5px;line-height:20px;color:#e3e3e3;letter-spacing:-0.180px;">registration-callback.js</span>
<span class="t" id="t84" style="left:1104.85px;top:408.82px;font-size:15.5px;line-height:20px;color:#8f8f8f;letter-spacing:-0.135px;">200</span>
<span class="t" id="t85" style="left:1197.55px;top:408.82px;font-size:15.5px;line-height:20px;color:#e3e3e3;letter-spacing:0.012px;">script</span>
<span class="t" id="t86" style="left:1291.15px;top:408.82px;font-size:15.5px;line-height:20px;color:#e3e3e3;letter-spacing:0.254px;text-decoration:underline;width:149.85px;overflow:hidden;">/auth/module.php/multiauth</span>
<span class="t" id="t87" style="left:1446.35px;top:408.82px;font-size:15.5px;line-height:20px;color:#8f8f8f;letter-spacing:-0.347px;">(memory c...</span>
<span class="t" id="t88" style="left:1540.05px;top:408.82px;font-size:15.5px;line-height:20px;color:#e3e3e3;letter-spacing:-0.600px;transform:scaleX(0.9827);transform-origin:0 0;">0...</span>
<div class="b" style="left:722.25px;top:430.5px;width:836px;height:26.25px;background:#26282c;"></div>
<svg class="b" style="left:730px;top:436.5px;" width="15" height="15" viewBox="0 0 15 15"><rect x="1" y="1" width="12.600" height="12.600" rx="1.800" stroke="#ee8d5c" stroke-width="1.500" fill="none"/><path d="M5.900 5.200L4 7.200l1.900 2M8.700 5.200l1.900 2l-1.900 2" stroke="#ee8d5c" stroke-width="1.300" fill="none"/></svg>
<span class="t" id="t89" style="left:749.95px;top:434.82px;font-size:15.5px;line-height:20px;color:#e3e3e3;letter-spacing:-0.334px;">main.js</span>
<span class="t" id="t90" style="left:1104.85px;top:434.82px;font-size:15.5px;line-height:20px;color:#8f8f8f;letter-spacing:-0.135px;">200</span>
<span class="t" id="t91" style="left:1197.55px;top:434.82px;font-size:15.5px;line-height:20px;color:#e3e3e3;letter-spacing:0.012px;">script</span>
<span class="t" id="t92" style="left:1291.15px;top:434.82px;font-size:15.5px;line-height:20px;color:#e3e3e3;letter-spacing:0.254px;text-decoration:underline;width:149.85px;overflow:hidden;">/auth/module.php/multiauth</span>
<span class="t" id="t93" style="left:1446.35px;top:434.82px;font-size:15.5px;line-height:20px;color:#8f8f8f;letter-spacing:-0.347px;">(memory c...</span>
<span class="t" id="t94" style="left:1540.05px;top:434.82px;font-size:15.5px;line-height:20px;color:#e3e3e3;letter-spacing:-0.600px;transform:scaleX(0.9827);transform-origin:0 0;">0...</span>
<div class="b" style="left:722.25px;top:456.75px;width:836px;height:26.25px;background:#1f1f1f;"></div>
<svg class="b" style="left:730px;top:462.75px;" width="15" height="15" viewBox="0 0 15 15"><defs><linearGradient id="fg" x1="0" y1="0.3" x2="1" y2="0.7"><stop offset="0" stop-color="#fba70a"/><stop offset="1" stop-color="#ffd60e"/></linearGradient></defs><circle cx="7" cy="6.600" r="6.500" fill="url(#fg)"/><path d="M2.600 10.300C5.500 9.300 6.200 7.600 7.300 6C8.600 4.200 10 3.300 12.600 3.500" stroke="#3b2a12" stroke-width="0.900" fill="none"/></svg>
<span class="t" id="t95" style="left:749.95px;top:460.82px;font-size:15.5px;line-height:20px;color:#e3e3e3;letter-spacing:-0.213px;">favicon.ico</span>
<span class="t" id="t96" style="left:1104.85px;top:460.82px;font-size:15.5px;line-height:20px;color:#8f8f8f;letter-spacing:-0.135px;">200</span>
<span class="t" id="t97" style="left:1197.55px;top:460.82px;font-size:15.5px;line-height:20px;color:#e3e3e3;letter-spacing:0.089px;">x-icon</span>
<span class="t" id="t98" style="left:1291.15px;top:460.82px;font-size:15.5px;line-height:20px;color:#8f8f8f;letter-spacing:0.135px;">Other</span>
<span class="t" id="t99" style="left:1451.85px;top:460.82px;font-size:15.5px;line-height:20px;color:#8f8f8f;letter-spacing:-0.487px;">(disk cache)</span>
<span class="t" id="t100" style="left:1540.05px;top:460.82px;font-size:15.5px;line-height:20px;color:#e3e3e3;letter-spacing:-0.600px;transform:scaleX(0.9827);transform-origin:0 0;">3...</span>
<div class="b" style="left:722.25px;top:483.0px;width:836px;height:26.25px;background:#26282c;"></div>
<svg class="b" style="left:730px;top:489.0px;" width="15" height="15" viewBox="0 0 15 15"><rect x="1" y="1" width="12.600" height="12.600" rx="1.800" stroke="#7cacf8" stroke-width="1.500" fill="none"/><path d="M3.600 4h7.400M3.600 7.200h7.400M3.600 10.500h5.400" stroke="#7cacf8" stroke-width="1.600"/></svg>
<span class="t" id="t101" style="left:749.95px;top:487.82px;font-size:15.5px;line-height:20px;color:#e3e3e3;letter-spacing:-0.482px;">neverssl.com</span>
<span class="t" id="t102" style="left:1104.85px;top:487.82px;font-size:15.5px;line-height:20px;color:#e3e3e3;letter-spacing:-0.135px;">307</span>
<span class="t" id="t103" style="left:1197.55px;top:487.82px;font-size:15.5px;line-height:20px;color:#e3e3e3;letter-spacing:0.047px;">document</span>
<span class="t" id="t104" style="left:1269.55px;top:487.82px;font-size:15.5px;line-height:20px;color:#e3e3e3;letter-spacing:-0.600px;transform:scaleX(0.9730);transform-origin:0 0;">...</span>
<span class="t" id="t105" style="left:1291.15px;top:487.82px;font-size:15.5px;line-height:20px;color:#8f8f8f;letter-spacing:0.135px;">Other</span>
<span class="t" id="t106" style="left:1491.55px;top:487.82px;font-size:15.5px;line-height:20px;color:#e3e3e3;letter-spacing:-0.503px;">495 B</span>
<span class="t" id="t107" style="left:1540.05px;top:487.82px;font-size:15.5px;line-height:20px;color:#e3e3e3;letter-spacing:-0.600px;transform:scaleX(0.9827);transform-origin:0 0;">1...</span>
<div class="b" style="left:722.25px;top:509.25px;width:836px;height:26.25px;background:#1f1f1f;"></div>
<svg class="b" style="left:730px;top:515.25px;" width="15" height="15" viewBox="0 0 15 15"><rect x="1" y="1" width="12.600" height="12.600" rx="1.800" stroke="#7cacf8" stroke-width="1.500" fill="none"/><path d="M3.600 4h7.400M3.600 7.200h7.400M3.600 10.500h5.400" stroke="#7cacf8" stroke-width="1.600"/></svg>
<span class="t" id="t108" style="left:749.95px;top:513.82px;font-size:15.5px;line-height:20px;color:#e3e3e3;letter-spacing:-0.429px;">spzscalerthree.net?url=http%3a%2f%2fneverssl%2...</span>
<span class="t" id="t109" style="left:1104.85px;top:513.82px;font-size:15.5px;line-height:20px;color:#e3e3e3;letter-spacing:-0.135px;">302</span>
<span class="t" id="t110" style="left:1197.55px;top:513.82px;font-size:15.5px;line-height:20px;color:#e3e3e3;letter-spacing:0.047px;">document</span>
<span class="t" id="t111" style="left:1269.55px;top:513.82px;font-size:15.5px;line-height:20px;color:#e3e3e3;letter-spacing:-0.600px;transform:scaleX(0.9730);transform-origin:0 0;">...</span>
<span class="t" id="t112" style="left:1291.15px;top:513.82px;font-size:15.5px;line-height:20px;color:#e3e3e3;letter-spacing:-0.310px;text-decoration:underline;">neverssl.com/</span>
<span class="t" id="t113" style="left:1490.15px;top:513.82px;font-size:15.5px;line-height:20px;color:#e3e3e3;letter-spacing:-0.600px;transform:scaleX(0.9744);transform-origin:0 0;">1.1 kB</span>
<span class="t" id="t114" style="left:1540.05px;top:513.82px;font-size:15.5px;line-height:20px;color:#e3e3e3;letter-spacing:-0.600px;transform:scaleX(0.9827);transform-origin:0 0;">1...</span>
<div class="b" style="left:722.25px;top:535.5px;width:836px;height:26.25px;background:#26282c;"></div>
<svg class="b" style="left:730px;top:541.5px;" width="15" height="15" viewBox="0 0 15 15"><rect x="1" y="1" width="12.600" height="12.600" rx="1.800" stroke="#7cacf8" stroke-width="1.500" fill="none"/><path d="M3.600 4h7.400M3.600 7.200h7.400M3.600 10.500h5.400" stroke="#7cacf8" stroke-width="1.600"/></svg>
<span class="t" id="t115" style="left:749.95px;top:539.82px;font-size:15.5px;line-height:20px;color:#e3e3e3;letter-spacing:-0.461px;">selectsource.php?AuthState=_b46886860317bace...</span>
<span class="t" id="t116" style="left:1104.85px;top:539.82px;font-size:15.5px;line-height:20px;color:#e3e3e3;letter-spacing:-0.135px;">200</span>
<span class="t" id="t117" style="left:1197.55px;top:539.82px;font-size:15.5px;line-height:20px;color:#e3e3e3;letter-spacing:0.047px;">document</span>
<span class="t" id="t118" style="left:1291.15px;top:539.82px;font-size:15.5px;line-height:20px;color:#e3e3e3;letter-spacing:-0.030px;text-decoration:underline;width:149.85px;overflow:hidden;">/start/ch/1d4e535.../spzscalerthree</span>
<span class="t" id="t119" style="left:1481.15px;top:539.82px;font-size:15.5px;line-height:20px;color:#e3e3e3;letter-spacing:-0.600px;transform:scaleX(0.9988);transform-origin:0 0;">32.3 kB</span>
<span class="t" id="t120" style="left:1540.05px;top:539.82px;font-size:15.5px;line-height:20px;color:#e3e3e3;letter-spacing:-0.600px;transform:scaleX(0.9827);transform-origin:0 0;">2...</span>
<div class="b" style="left:722.25px;top:561.75px;width:836px;height:26.25px;background:#1f1f1f;"></div>
<svg class="b" style="left:730px;top:567.75px;" width="15" height="15" viewBox="0 0 15 15"><rect x="1" y="1" width="12.600" height="12.600" rx="1.800" stroke="#c58af9" stroke-width="1.500" fill="none"/><path d="M4.800 9.800L10.700 3.800" stroke="#c58af9" stroke-width="1.900"/><circle cx="4.500" cy="10.100" r="1.700" fill="#c58af9"/></svg>
<span class="t" id="t121" style="left:749.95px;top:565.82px;font-size:15.5px;line-height:20px;color:#e3e3e3;letter-spacing:-0.600px;transform:scaleX(0.9938);transform-origin:0 0;">main.css</span>
<span class="t" id="t122" style="left:1104.85px;top:565.82px;font-size:15.5px;line-height:20px;color:#e3e3e3;letter-spacing:-0.135px;">200</span>
<span class="t" id="t123" style="left:1197.55px;top:565.82px;font-size:15.5px;line-height:20px;color:#e3e3e3;letter-spacing:-0.299px;">stylesheet</span>
<span class="t" id="t124" style="left:1291.15px;top:565.82px;font-size:15.5px;line-height:20px;color:#e3e3e3;letter-spacing:-0.374px;text-decoration:underline;width:149.85px;overflow:hidden;">selectsource.php?AuthState</span>
<span class="t" id="t125" style="left:1481.15px;top:565.82px;font-size:15.5px;line-height:20px;color:#e3e3e3;letter-spacing:-0.600px;transform:scaleX(0.9988);transform-origin:0 0;">21.9 kB</span>
<span class="t" id="t126" style="left:1540.05px;top:565.82px;font-size:15.5px;line-height:20px;color:#e3e3e3;letter-spacing:-0.600px;transform:scaleX(0.9827);transform-origin:0 0;">8...</span>
<div class="b" style="left:722.25px;top:588.0px;width:836px;height:26.25px;background:#26282c;"></div>
<svg class="b" style="left:730px;top:594.0px;" width="15" height="15" viewBox="0 0 15 15"><rect x="1" y="1" width="12.600" height="12.600" rx="1.800" stroke="#c58af9" stroke-width="1.500" fill="none"/><path d="M4.800 9.800L10.700 3.800" stroke="#c58af9" stroke-width="1.900"/><circle cx="4.500" cy="10.100" r="1.700" fill="#c58af9"/></svg>
<span class="t" id="t127" style="left:749.95px;top:592.82px;font-size:15.5px;line-height:20px;color:#e3e3e3;letter-spacing:-0.460px;">fontawesome.css</span>
<span class="t" id="t128" style="left:1104.85px;top:592.82px;font-size:15.5px;line-height:20px;color:#e3e3e3;letter-spacing:-0.135px;">200</span>
<span class="t" id="t129" style="left:1197.55px;top:592.82px;font-size:15.5px;line-height:20px;color:#e3e3e3;letter-spacing:-0.299px;">stylesheet</span>
<span class="t" id="t130" style="left:1291.15px;top:592.82px;font-size:15.5px;line-height:20px;color:#e3e3e3;letter-spacing:-0.374px;text-decoration:underline;width:149.85px;overflow:hidden;">selectsource.php?AuthState</span>
<span class="t" id="t131" style="left:1481.15px;top:592.82px;font-size:15.5px;line-height:20px;color:#e3e3e3;letter-spacing:-0.600px;transform:scaleX(0.9988);transform-origin:0 0;">43.1 kB</span>
<span class="t" id="t132" style="left:1540.05px;top:592.82px;font-size:15.5px;line-height:20px;color:#e3e3e3;letter-spacing:-0.600px;transform:scaleX(0.9827);transform-origin:0 0;">1...</span>
<div class="b" style="left:722.25px;top:614.25px;width:836px;height:26.25px;background:#1f1f1f;"></div>
<svg class="b" style="left:730px;top:620.25px;" width="15" height="15" viewBox="0 0 15 15"><circle cx="2.900" cy="7.500" r="1.300" fill="#e8a51e"/><path d="M8 7.600h4" stroke="#2a3240" stroke-width="1"/></svg>
<span class="t" id="t133" style="left:749.95px;top:618.82px;font-size:15.5px;line-height:20px;color:#e3e3e3;letter-spacing:-0.161px;">logo.svg</span>
<span class="t" id="t134" style="left:1104.85px;top:618.82px;font-size:15.5px;line-height:20px;color:#e3e3e3;letter-spacing:-0.135px;">200</span>
<span class="t" id="t135" style="left:1197.55px;top:618.82px;font-size:15.5px;line-height:20px;color:#e3e3e3;">svg+xml</span>
<span class="t" id="t136" style="left:1291.15px;top:618.82px;font-size:15.5px;line-height:20px;color:#e3e3e3;letter-spacing:-0.374px;text-decoration:underline;width:149.85px;overflow:hidden;">selectsource.php?AuthState</span>
<span class="t" id="t137" style="left:1489.35px;top:618.82px;font-size:15.5px;line-height:20px;color:#e3e3e3;letter-spacing:-0.600px;transform:scaleX(0.9939);transform-origin:0 0;">4.0 kB</span>
<span class="t" id="t138" style="left:1540.05px;top:618.82px;font-size:15.5px;line-height:20px;color:#e3e3e3;letter-spacing:-0.600px;transform:scaleX(0.9827);transform-origin:0 0;">1...</span>
<div class="b" style="left:722.25px;top:640.5px;width:836px;height:26.25px;background:#26282c;"></div>
<svg class="b" style="left:730px;top:646.5px;" width="15" height="15" viewBox="0 0 15 15"><rect x="1" y="1" width="12.600" height="12.600" rx="1.800" stroke="#ee8d5c" stroke-width="1.500" fill="none"/><path d="M5.900 5.200L4 7.200l1.900 2M8.700 5.200l1.900 2l-1.900 2" stroke="#ee8d5c" stroke-width="1.300" fill="none"/></svg>
<span class="t" id="t139" style="left:749.95px;top:644.82px;font-size:15.5px;line-height:20px;color:#e3e3e3;letter-spacing:-0.084px;">jquery.js</span>
<span class="t" id="t140" style="left:1104.85px;top:644.82px;font-size:15.5px;line-height:20px;color:#e3e3e3;letter-spacing:-0.135px;">200</span>
<span class="t" id="t141" style="left:1197.55px;top:644.82px;font-size:15.5px;line-height:20px;color:#e3e3e3;letter-spacing:0.012px;">script</span>
<span class="t" id="t142" style="left:1291.15px;top:644.82px;font-size:15.5px;line-height:20px;color:#e3e3e3;letter-spacing:-0.374px;text-decoration:underline;width:149.85px;overflow:hidden;">selectsource.php?AuthState</span>
<span class="t" id="t143" style="left:1481.15px;top:644.82px;font-size:15.5px;line-height:20px;color:#e3e3e3;letter-spacing:-0.600px;transform:scaleX(0.9988);transform-origin:0 0;">31.5 kB</span>
<span class="t" id="t144" style="left:1540.05px;top:644.82px;font-size:15.5px;line-height:20px;color:#e3e3e3;letter-spacing:-0.600px;transform:scaleX(0.9827);transform-origin:0 0;">7...</span>
<div class="b" style="left:722.25px;top:666.75px;width:836px;height:26.25px;background:#1f1f1f;"></div>
<svg class="b" style="left:730px;top:672.75px;" width="15" height="15" viewBox="0 0 15 15"><rect x="1" y="1" width="12.600" height="12.600" rx="1.800" stroke="#ee8d5c" stroke-width="1.500" fill="none"/><path d="M5.900 5.200L4 7.200l1.900 2M8.700 5.200l1.900 2l-1.900 2" stroke="#ee8d5c" stroke-width="1.300" fill="none"/></svg>
<span class="t" id="t145" style="left:749.95px;top:670.82px;font-size:15.5px;line-height:20px;color:#e3e3e3;letter-spacing:-0.180px;">registration-callback.js</span>
<span class="t" id="t146" style="left:1104.85px;top:670.82px;font-size:15.5px;line-height:20px;color:#e3e3e3;letter-spacing:-0.135px;">200</span>
<span class="t" id="t147" style="left:1197.55px;top:670.82px;font-size:15.5px;line-height:20px;color:#e3e3e3;letter-spacing:0.012px;">script</span>
<span class="t" id="t148" style="left:1291.15px;top:670.82px;font-size:15.5px;line-height:20px;color:#e3e3e3;letter-spacing:-0.374px;text-decoration:underline;width:149.85px;overflow:hidden;">selectsource.php?AuthState</span>
<span class="t" id="t149" style="left:1489.15px;top:670.82px;font-size:15.5px;line-height:20px;color:#e3e3e3;letter-spacing:-0.600px;transform:scaleX(0.9988);transform-origin:0 0;">4.2 kB</span>
<span class="t" id="t150" style="left:1540.05px;top:670.82px;font-size:15.5px;line-height:20px;color:#e3e3e3;letter-spacing:-0.600px;transform:scaleX(0.9827);transform-origin:0 0;">7...</span>
<div class="b" style="left:722.25px;top:693.0px;width:836px;height:26.25px;background:#26282c;"></div>
<svg class="b" style="left:730px;top:699.0px;" width="15" height="15" viewBox="0 0 15 15"><rect x="1" y="1" width="12.600" height="12.600" rx="1.800" stroke="#ee8d5c" stroke-width="1.500" fill="none"/><path d="M5.900 5.200L4 7.200l1.900 2M8.700 5.200l1.900 2l-1.900 2" stroke="#ee8d5c" stroke-width="1.300" fill="none"/></svg>
<span class="t" id="t151" style="left:749.95px;top:697.82px;font-size:15.5px;line-height:20px;color:#e3e3e3;letter-spacing:-0.334px;">main.js</span>
<span class="t" id="t152" style="left:1104.85px;top:697.82px;font-size:15.5px;line-height:20px;color:#e3e3e3;letter-spacing:-0.135px;">200</span>
<span class="t" id="t153" style="left:1197.55px;top:697.82px;font-size:15.5px;line-height:20px;color:#e3e3e3;letter-spacing:0.012px;">script</span>
<span class="t" id="t154" style="left:1291.15px;top:697.82px;font-size:15.5px;line-height:20px;color:#e3e3e3;letter-spacing:-0.374px;text-decoration:underline;width:149.85px;overflow:hidden;">selectsource.php?AuthState</span>
<span class="t" id="t155" style="left:1481.15px;top:697.82px;font-size:15.5px;line-height:20px;color:#e3e3e3;letter-spacing:-0.600px;transform:scaleX(0.9988);transform-origin:0 0;">29.5 kB</span>
<span class="t" id="t156" style="left:1540.05px;top:697.82px;font-size:15.5px;line-height:20px;color:#e3e3e3;letter-spacing:-0.600px;transform:scaleX(0.9827);transform-origin:0 0;">8...</span>
<div class="b" style="left:722.25px;top:719.25px;width:836px;height:26.25px;background:#1f1f1f;"></div>
<svg class="b" style="left:730px;top:725.25px;" width="15" height="15" viewBox="0 0 15 15"><path d="M2.600 7.700l3 3l5.800-6.300" stroke="#ffffff" stroke-width="2" fill="none"/></svg>
<span class="t" id="t157" style="left:749.95px;top:723.82px;font-size:15.5px;line-height:20px;color:#e3e3e3;letter-spacing:-0.209px;">data:image/svg+xml;...</span>
<span class="t" id="t158" style="left:1104.85px;top:723.82px;font-size:15.5px;line-height:20px;color:#8f8f8f;letter-spacing:-0.135px;">200</span>
<span class="t" id="t159" style="left:1197.55px;top:723.82px;font-size:15.5px;line-height:20px;color:#e3e3e3;">svg+xml</span>
<span class="t" id="t160" style="left:1291.15px;top:723.82px;font-size:15.5px;line-height:20px;color:#e3e3e3;letter-spacing:-0.593px;text-decoration:underline;">main.css</span>
<span class="t" id="t161" style="left:1446.35px;top:723.82px;font-size:15.5px;line-height:20px;color:#8f8f8f;letter-spacing:-0.347px;">(memory c...</span>
<span class="t" id="t162" style="left:1540.05px;top:723.82px;font-size:15.5px;line-height:20px;color:#e3e3e3;letter-spacing:-0.600px;transform:scaleX(0.9827);transform-origin:0 0;">0...</span>
<div class="b" style="left:722.25px;top:302px;width:836px;height:33px;background:#26282c;"></div>
<div class="b" style="left:722.25px;top:335px;width:836px;height:1px;background:#5e5e5e;"></div>
<span class="t" id="t163" style="left:727.35px;top:309.82px;font-size:15.5px;line-height:20px;color:#e3e3e3;letter-spacing:-0.085px;">Name</span>
<span class="t" id="t164" style="left:1104.85px;top:309.82px;font-size:15.5px;line-height:20px;color:#e3e3e3;letter-spacing:-0.390px;">Status</span>
<span class="t" id="t165" style="left:1197.55px;top:309.82px;font-size:15.5px;line-height:20px;color:#e3e3e3;letter-spacing:-0.435px;">Type</span>
<span class="t" id="t166" style="left:1291.15px;top:309.82px;font-size:15.5px;line-height:20px;color:#e3e3e3;letter-spacing:0.295px;">Initiator</span>
<span class="t" id="t167" style="left:1445.85px;top:309.82px;font-size:15.5px;line-height:20px;color:#e3e3e3;letter-spacing:-0.600px;transform:scaleX(0.9876);transform-origin:0 0;">Size</span>
<span class="t" id="t168" style="left:1540.05px;top:309.82px;font-size:15.5px;line-height:20px;color:#e3e3e3;letter-spacing:-0.035px;">T..</span>
<div class="b" style="left:1099.6000000000001px;top:302px;width:1.2px;height:443px;background:#4f4f4f;"></div>
<div class="b" style="left:1192.1000000000001px;top:302px;width:1.2px;height:443px;background:#4f4f4f;"></div>
<div class="b" style="left:1286.0px;top:302px;width:1.2px;height:443px;background:#4f4f4f;"></div>
<div class="b" style="left:1440.6000000000001px;top:302px;width:1.2px;height:443px;background:#4f4f4f;"></div>
<div class="b" style="left:1534.8000000000002px;top:302px;width:1.2px;height:443px;background:#4f4f4f;"></div>
<div class="b" style="left:1558.3px;top:302px;width:20px;height:443px;background:#424242;"></div>
<div class="b" style="left:1558.3px;top:302px;width:20px;height:33px;background:#282828;"></div>
<div class="b" style="left:1558.3px;top:335px;width:20px;height:1px;background:#5e5e5e;"></div>
<svg class="b" style="left:1562.3px;top:310.5px;" width="12" height="7" viewBox="0 0 12 7"><path d="M0.800 6.200L6 0.800l5.200 5.400z" fill="#ffffff"/></svg>
<div class="b" style="left:1560.2px;top:372px;width:16.4px;height:348.5px;background:#686868;"></div>
<svg class="b" style="left:1562.3px;top:728.5px;" width="12" height="7" viewBox="0 0 12 7"><path d="M0.800 0.800h10.400L6 6.200z" fill="#ffffff"/></svg>
<div class="b" style="left:722.25px;top:745px;width:856px;height:1px;background:#5e5e5e;"></div>
<div class="b" style="left:722.25px;top:746px;width:856px;height:32px;background:#282828;"></div>
<span class="t" id="t169" style="left:734.65px;top:751.82px;font-size:15.5px;line-height:20px;color:#c7c7c7;letter-spacing:-0.419px;">18 requests</span>
<div class="b" style="left:821.9px;top:751.5px;width:1.3px;height:19px;background:#5c5c5c;"></div>
<span class="t" id="t170" style="left:834.05px;top:751.82px;font-size:15.5px;line-height:20px;color:#c7c7c7;letter-spacing:-0.312px;">200 kB transferred</span>
<div class="b" style="left:967.1px;top:751.5px;width:1.3px;height:19px;background:#5c5c5c;"></div>
<span class="t" id="t171" style="left:979.15px;top:751.82px;font-size:15.5px;line-height:20px;color:#c7c7c7;letter-spacing:-0.518px;">1.4 MB resources</span>
<div class="b" style="left:1103.4px;top:751.5px;width:1.3px;height:19px;background:#5c5c5c;"></div>
<span class="t" id="t172" style="left:1115.15px;top:751.82px;font-size:15.5px;line-height:20px;color:#c7c7c7;letter-spacing:-0.579px;">Finish: 21.00 s</span>
<div class="b" style="left:1218.4px;top:751.5px;width:1.3px;height:19px;background:#5c5c5c;"></div>
<span class="t" id="t173" style="left:1230.85px;top:751.82px;font-size:15.5px;line-height:20px;color:#f0783e;letter-spacing:-0.325px;">DOMContentLoaded: 411 ms</span>
<div class="b" style="left:1434.6px;top:751.5px;width:1.3px;height:19px;background:#5c5c5c;"></div>
<span class="t" id="t174" style="left:1446.35px;top:751.82px;font-size:15.5px;line-height:20px;color:#4fc3f7;letter-spacing:-0.467px;">Load: 413 ms</span>
<div class="b" style="left:722.25px;top:778px;width:856px;height:1px;background:#5e5e5e;"></div>
<div class="b" style="left:722.25px;top:779px;width:856px;height:33px;background:#3c3c3c;"></div>
<div class="b" style="left:722.25px;top:812px;width:856px;height:1px;background:#5e5e5e;"></div>
<div class="b" style="left:740.7px;top:788.5px;width:3.3px;height:3.3px;background:#c7c7c7;border-radius:2px;"></div>
<div class="b" style="left:740.7px;top:794.0px;width:3.3px;height:3.3px;background:#c7c7c7;border-radius:2px;"></div>
<div class="b" style="left:740.7px;top:799.4px;width:3.3px;height:3.3px;background:#c7c7c7;border-radius:2px;"></div>
<span class="t" id="t175" style="left:768.15px;top:786.82px;font-size:15.5px;line-height:20px;color:#c7c7c7;letter-spacing:-0.362px;">Console</span>
<span class="t" id="t176" style="left:846.15px;top:786.82px;font-size:15.5px;line-height:20px;color:#c7c7c7;letter-spacing:-0.237px;">What&#x27;s new</span>
<span class="t" id="t177" style="left:960.85px;top:786.82px;font-size:15.5px;line-height:20px;color:#c7c7c7;letter-spacing:-0.600px;transform:scaleX(0.9639);transform-origin:0 0;">Issues</span>
<span class="t" id="t178" style="left:1039.75px;top:786.82px;font-size:15.5px;line-height:20px;color:#7cacf8;letter-spacing:-0.015px;">Network conditions</span>
<div class="b" style="left:1028px;top:810.2px;width:169px;height:2.4px;background:#7cacf8;"></div>
<svg class="b" style="left:1179px;top:789.5px;" width="12" height="12" viewBox="0 0 12 12"><path d="M1.200 1.200l9.600 9.600M10.800 1.200l-9.600 9.600" stroke="#c7c7c7" stroke-width="1.500"/></svg>
<svg class="b" style="left:1551.5px;top:789px;" width="14" height="14" viewBox="0 0 14 14"><path d="M1 1l12 12M13 1L1 13" stroke="#c7c7c7" stroke-width="1.600"/></svg>
<div class="b" style="left:722.25px;top:813px;width:856px;height:108px;background:#282828;"></div>
<span class="t" id="t179" style="left:736.05px;top:836.82px;font-size:15.5px;line-height:20px;color:#e3e3e3;letter-spacing:-0.345px;">Caching</span>
<div class="b" style="left:925px;top:838.4px;width:14.8px;height:14.8px;background:#7cacf8;border-radius:2.500px;"></div>
<svg class="b" style="left:925px;top:838.4px;" width="15" height="15" viewBox="0 0 15 15"><path d="M2.700 7.500l3.200 3.500l6.100-8" stroke="#26282c" stroke-width="1.700" fill="none"/></svg>
<span class="t" id="t180" style="left:946.65px;top:836.82px;font-size:15.5px;line-height:20px;color:#e3e3e3;letter-spacing:-0.513px;">Disable cache</span>
<div class="b" style="left:736.9px;top:877.4px;width:806.4px;height:1.3px;background:#5e5e5e;"></div>
<span class="t" id="t181" style="left:736.15px;top:897.82px;font-size:15.5px;line-height:20px;color:#e3e3e3;letter-spacing:0.206px;">Network throttling</span>
<div class="b" style="left:920px;top:890.8px;width:311.7px;height:29.8px;background:#1f1f1f;border:1.200px solid #757575;border-radius:5px;"></div>
<span class="t" id="t182" style="left:927.35px;top:897.82px;font-size:15.5px;line-height:20px;color:#e3e3e3;letter-spacing:0.327px;">No throttling</span>
<svg class="b" style="left:1212.5px;top:902.8px;" width="12" height="7" viewBox="0 0 12 7"><path d="M0.600 0.400h10.400l-5.200 5.600z" fill="#a8a8a8"/></svg>
<div class="b" style="left:1558.3px;top:813px;width:20px;height:109px;background:#424242;"></div>
<svg class="b" style="left:1562.3px;top:821.5px;" width="12" height="7" viewBox="0 0 12 7"><path d="M0.800 6.200L6 0.800l5.200 5.400z" fill="#8a8a8a"/></svg>
<div class="b" style="left:1560.2px;top:834.4px;width:16.4px;height:20.5px;background:#686868;"></div>
<svg class="b" style="left:1562.3px;top:908px;" width="12" height="7" viewBox="0 0 12 7"><path d="M0.800 0.800h10.400L6 6.200z" fill="#ffffff"/></svg>
</div></div>
</body></html>
